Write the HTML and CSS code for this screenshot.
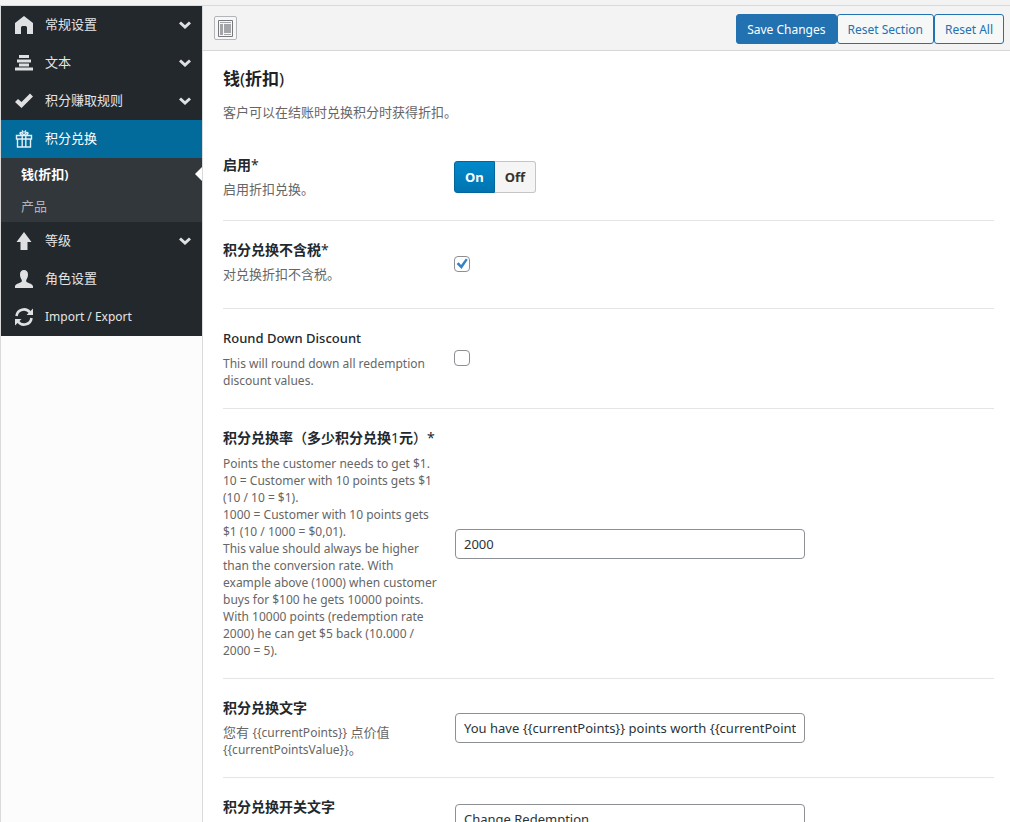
FILE: index.html
```html
<!DOCTYPE html>
<html lang="zh-CN">
<head>
<meta charset="utf-8">
<meta name="viewport" content="width=device-width, initial-scale=1">
<title>积分兑换</title>
<link rel="stylesheet" href="styles.css">
</head>
<body>
<div class="panel">
  <nav class="sidebar" aria-label="Sections">
    <ul class="menu">
      <li><a class="menu-link" href="#general">
        <svg class="icon" viewBox="0 0 18 18"><path d="M9 0 L18 7 V18 H12 V11.500 Q12 10 10.500 10 H7.500 Q6 10 6 11.500 V18 H0 V7 Z"/></svg>
        <span class="menu-text">常规设置</span>
        <svg class="chevron" viewBox="0 0 12 8"><path d="M1 1.500 L6 6 L11 1.500"/></svg></a></li>
      <li><a class="menu-link" href="#text">
        <svg class="icon" viewBox="0 0 18 18"><path d="M4 1h10v3H4zM2 5.500h14v3H2zM4 9.500h10v3H4zM0 13.500h18v3H0z"/></svg>
        <span class="menu-text">文本</span>
        <svg class="chevron" viewBox="0 0 12 8"><path d="M1 1.500 L6 6 L11 1.500"/></svg></a></li>
      <li><a class="menu-link" href="#earning">
        <svg class="icon" viewBox="0 0 18 18"><path d="M0 10 L3 7 L6.500 10 L15 1.500 L18 4.500 L6.500 16 Z"/></svg>
        <span class="menu-text">积分赚取规则</span>
        <svg class="chevron" viewBox="0 0 12 8"><path d="M1 1.500 L6 6 L11 1.500"/></svg></a></li>
      <li class="active"><a class="menu-link" href="#redeem">
        <svg class="icon line" viewBox="0 0 18 18"><path d="M1.500 5.500h15v3.500h-15zM2.500 9v8h13V9M7.200 5.500V17M10.800 5.500V17M8.500 5C7.500 2.500 5 1.500 5 3.500L6.500 5M9.500 5C10.500 2.500 13 1.500 13 3.500L11.500 5M8.500 2.500L7 0.500M9.500 2.500L11 0.500"/></svg>
        <span class="menu-text">积分兑换</span></a>
        <ul class="submenu">
          <li><a class="submenu-link current" href="#money">钱(折扣)</a></li>
          <li><a class="submenu-link" href="#products">产品</a></li>
        </ul></li>
      <li><a class="menu-link" href="#levels">
        <svg class="icon" viewBox="0 0 18 18"><path d="M9 0 L16.500 10 H12.500 V18 H5.500 V10 H1.500 Z"/></svg>
        <span class="menu-text">等级</span>
        <svg class="chevron" viewBox="0 0 12 8"><path d="M1 1.500 L6 6 L11 1.500"/></svg></a></li>
      <li><a class="menu-link" href="#roles">
        <svg class="icon" viewBox="0 0 18 18"><path d="M9 0C11.500 0 13 1.500 13 4.500C13 7 12 9 11.200 10V11.500C12 13 18 13.500 18 16.500V18H0V16.500C0 13.500 6 13 6.800 11.500V10C6 9 5 7 5 4.500C5 1.500 6.500 0 9 0Z"/></svg>
        <span class="menu-text">角色设置</span></a></li>
      <li><a class="menu-link" href="#import">
        <svg class="icon refresh" viewBox="0 0 18 18"><path class="arc" d="M1.500 8A7.500 7.500 0 0 1 15 4.500M16.500 10A7.500 7.500 0 0 1 3 13.500"/><path d="M18 0.500V7H11.500ZM0 17.500V11H6.500Z"/></svg>
        <span class="menu-text en">Import / Export</span></a></li>
    </ul>
  </nav>

  <main class="main">
    <header class="toolbar">
      <button class="expand" type="button" aria-label="Expand">
        <svg class="expand-icon" viewBox="0 0 15 17"><path class="frame" d="M0.500 0.500h14v16h-14z"/><path class="bars" d="M2 2h11v1H2zM2 4h3v11H2zM6 4h7v9H6zM6 14h7v1H6z"/></svg>
      </button>
      <div class="actions">
        <button class="btn primary" type="submit">Save Changes</button>
        <button class="btn" type="button">Reset Section</button>
        <button class="btn" type="button">Reset All</button>
      </div>
    </header>

    <form class="section">
      <h2 class="title">钱<span class="latin">(</span>折扣<span class="latin">)</span></h2>
      <p class="intro">客户可以在结账时兑换积分时获得折扣。</p>

      <div class="row">
        <div class="info">
          <div class="label" id="enable-label">启用<span class="latin">*</span></div>
          <p class="desc">启用折扣兑换。</p>
        </div>
        <div class="control switch-control">
          <div class="switch" role="group" aria-labelledby="enable-label">
            <button class="switch-btn on" type="button" aria-pressed="true">On</button>
            <button class="switch-btn" type="button" aria-pressed="false">Off</button>
          </div>
        </div>
      </div>

      <div class="row">
        <div class="info">
          <label class="label" for="tax">积分兑换不含税<span class="latin">*</span></label>
          <p class="desc">对兑换折扣不含税。</p>
        </div>
        <div class="control check-control"><input class="check" type="checkbox" id="tax" checked></div>
      </div>

      <div class="row">
        <div class="info">
          <label class="label label-en" for="round">Round Down Discount</label>
          <p class="desc desc-en">This will round down all redemption discount values.</p>
        </div>
        <div class="control check-control"><input class="check" type="checkbox" id="round"></div>
      </div>

      <div class="row">
        <div class="info">
          <label class="label" for="rate">积分兑换率<span class="full">（</span>多少积分兑换<span class="latin">1</span>元<span class="full">）</span><span class="latin">*</span></label>
          <p class="desc desc-en">Points the customer needs to get $1.<br>10 = Customer with 10 points gets $1 (10 / 10 = $1).<br>1000 = Customer with 10 points gets $1 (10 / 1000 = $0,01).<br>This value should always be higher than the conversion rate. With example above (1000) when customer buys for $100 he gets 10000 points. With 10000 points (redemption rate 2000) he can get $5 back (10.000 / 2000 = 5).</p>
        </div>
        <div class="control"><input class="field" type="text" id="rate" value="2000"></div>
      </div>

      <div class="row">
        <div class="info">
          <label class="label" for="text">积分兑换文字</label>
          <p class="desc">您有 <span class="en">{{currentPoints}}</span> 点价值 <span class="en">{{currentPointsValue}}</span>。</p>
        </div>
        <div class="control"><input class="field" type="text" id="text" value="You have {{currentPoints}} points worth {{currentPointsValue}}."></div>
      </div>

      <div class="row">
        <div class="info">
          <label class="label" for="toggle">积分兑换开关文字</label>
        </div>
        <div class="control"><input class="field" type="text" id="toggle" value="Change Redemption"></div>
      </div>
    </form>
  </main>
</div>
</body>
</html>
```
FILE: styles.css
```css
* { box-sizing: border-box; }

body {
  margin: 0;
  height: 100vh;
  padding-top: 5px;
  overflow: hidden;
  background: #f3f3f4;
  color: #3c434a;
  font: 13px/17px "Noto Sans", "Noto Sans CJK SC", sans-serif;
}

ul { margin: 0; padding: 0; list-style: none; }
p, h2 { margin: 0; }
a { color: inherit; text-decoration: none; }
button, input { font-family: inherit; margin: 0; }

.en { font-size: 12px; }

.panel {
  display: flex;
  height: 100%;
  border-top: 1px solid #d9dadc;
  border-left: 1px solid #d9dadc;
  background: #fcfcfd;
}

.sidebar { flex: 0 0 202px; border-right: 1px solid #d9dadc; }
.menu { background: #23282d; color: #e4e5e7; }
.menu-link {
  display: flex;
  align-items: center;
  height: 38px;
  padding: 0 11px 1px 14px;
}
.active > .menu-link { background: #036b9c; color: #fff; }
.icon { width: 18px; height: 18px; margin-right: 12px; fill: #dfe0e2; }
.icon.line { fill: none; stroke: #e4eef4; stroke-width: 1.4; }
.refresh .arc { fill: none; stroke: #dfe0e2; stroke-width: 2.6; }
.menu-text { flex: 1; }
.chevron { width: 12px; height: 8px; fill: none; stroke: #dfe0e2; stroke-width: 3; }

.submenu { background: #32373c; color: #b0b4b8; }
.submenu-link {
  position: relative;
  display: flex;
  align-items: center;
  height: 32px;
  padding-left: 20px;
}
.submenu-link.current { color: #fff; font-weight: 600; }
.submenu-link.current::after {
  content: "";
  position: absolute;
  right: 0;
  top: 9px;
  border: 7px solid transparent;
  border-left-width: 0;
  border-right-color: #fff;
}

.main { flex: 1; min-width: 0; display: flex; flex-direction: column; background: #fff; }
.toolbar {
  flex: none;
  display: flex;
  align-items: center;
  justify-content: space-between;
  height: 45px;
  padding: 0 6px 0 11px;
  border-bottom: 1px solid #d5d6d8;
  background: #f3f3f4;
}
.expand {
  display: flex;
  align-items: center;
  justify-content: center;
  width: 23px;
  height: 24px;
  padding: 0;
  border: 1px solid #b4b5b8;
  border-radius: 2px;
  background: #f7f7f7;
}
.expand-icon { width: 15px; height: 17px; }
.frame { fill: none; stroke: #77797c; }
.bars { fill: #a3a5a8; }

.actions { display: flex; padding-top: 2px; }
.btn {
  height: 30px;
  padding: 0 10px;
  border: 1px solid #2271b1;
  border-radius: 3px;
  background: #f6f7f7;
  color: #2271b1;
  font-size: 12px;
  white-space: nowrap;
}
.btn.primary { background: #2271b1; color: #fff; }

.section {
  flex: 1;
  min-height: 0;
  overflow-y: auto;
  scrollbar-width: none;
  padding: 15px 16px 0 20px;
}
.title { font-size: 17px; line-height: 26px; font-weight: 600; color: #1d2327; }
.latin { font-weight: 400; }
.full { font-weight: 500; }
.intro { margin-top: 12px; margin-bottom: 15px; color: #666; }

.row {
  display: grid;
  grid-template-columns: 231px 1fr;
  align-items: center;
  border-bottom: 1px solid #e5e5e6;
}
.row:last-child { border-bottom: 0; }
.info { align-self: start; padding: 19px 10px 19px 0; }
.label { display: block; font-size: 14px; line-height: 20px; font-weight: 600; color: #23282d; }
.label-en { font-size: 13px; font-weight: 500; }
.desc { margin-top: 6px; color: #666; }
.desc-en { margin-top: 7px; font-size: 12px; }

.control { padding: 26px 0; }
.switch-control { padding: 25px 0 27px; }
.check-control { padding: 35px 0 36px; }
.switch { display: flex; }
.switch-btn {
  height: 32px;
  padding: 0 10px;
  border: 1px solid #c4c5c7;
  border-left: 0;
  border-radius: 0 3px 3px 0;
  background: #f5f5f5;
  color: #333;
  font-size: 13px;
  font-weight: 700;
}
.switch-btn.on {
  border: 1px solid #00669b;
  border-radius: 3px 0 0 3px;
  background: linear-gradient(#0089cc, #0074b0);
  color: #fff;
}
.check {
  appearance: none;
  display: block;
  width: 16px;
  height: 16px;
  border: 1px solid #8c8f94;
  border-radius: 4px;
  background: #fff;
}
.check:checked::before {
  content: "";
  display: block;
  width: 12px;
  height: 12px;
  margin: 1px;
  background: #3582c4;
  clip-path: polygon(5% 50%, 22% 36%, 42% 58%, 82% 4%, 98% 14%, 46% 92%);
}
.field {
  display: block;
  width: 350px;
  max-width: 100%;
  height: 30px;
  margin-left: 1px;
  padding: 0 8px;
  border: 1px solid #8c8f94;
  border-radius: 4px;
  background: #fff;
  color: #2c3338;
  font-size: 13px;
}
```
